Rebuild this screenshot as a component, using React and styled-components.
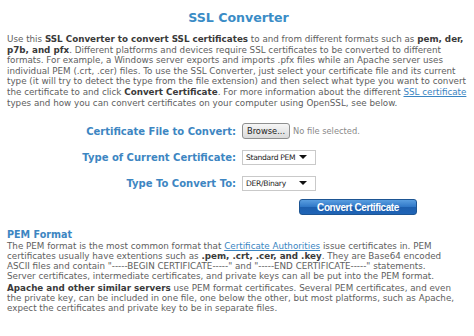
import React from "react";
import styled, { createGlobalStyle } from "styled-components";

const GlobalStyle = createGlobalStyle`
  body {
    margin: 0;
    background: #ffffff;
    font-family: "DejaVu Sans", Verdana, sans-serif;
  }
`;

const Page = styled.div`
  width: 474px;
  height: 336px;
  overflow: hidden;
  box-sizing: border-box;
  padding: 10px 4px 0 7px;
  color: #5e5e5e;
  font-size: 8.75px;
`;

const Title = styled.h1`
  margin: 0 0 8px;
  text-align: center;
  color: #3a8cc6;
  font-size: 12.6px;
  line-height: 16px;
  font-weight: bold;
`;

const Para = styled.p`
  margin: 0 0 ${(p) => p.$gap || 0}px;
  line-height: ${(p) => p.$lh || 10.6}px;
`;

// keeps each line of the original as one line
const Line = styled.span`
  display: block;
  white-space: nowrap;
`;

const Strong = styled.b`
  color: #3a3a3a;
`;

const Link = styled.a`
  color: #3a85c2;
  text-decoration: underline;
`;

const Form = styled.div`
  display: grid;
  grid-template-columns: 229px auto;
  grid-auto-rows: 16px;
  column-gap: 6px;
  row-gap: 10px;
  align-items: center;
  margin: 15px 0 0;
`;

const Label = styled.div`
  text-align: right;
  color: #3d86c2;
  font-weight: bold;
  font-size: 10px;
  white-space: nowrap;
`;

const FileField = styled.div`
  display: flex;
  align-items: center;
  gap: 3px;
  font-family: Tahoma, "DejaVu Sans", sans-serif;
  font-size: 8.3px;
  color: #8a8a8a;
  white-space: nowrap;
`;

const BrowseButton = styled.div`
  box-sizing: border-box;
  width: 48px;
  height: 16px;
  border: 1px solid #8e8f8f;
  border-radius: 3px;
  background: linear-gradient(#f6f6f6, #dadada);
  color: #222;
  display: flex;
  align-items: center;
  justify-content: center;
  font-size: 8.3px;
`;

const Select = styled.div`
  box-sizing: border-box;
  width: 74px;
  height: 15px;
  border: 1px solid #c9c9c9;
  background: #fff;
  display: flex;
  align-items: center;
  justify-content: space-between;
  padding: 0 8px 0 3px;
  font-size: 7.6px;
  color: #222;
  letter-spacing: -0.3px;
  white-space: nowrap;
`;

const Arrow = styled.span`
  width: 0;
  height: 0;
  border-left: 4px solid transparent;
  border-right: 4px solid transparent;
  border-top: 4px solid #111;
`;

const ButtonRow = styled.div`
  grid-column: 1 / span 2;
  display: flex;
  justify-content: flex-end;
  padding-right: 53px;
  margin-top: -4px;
`;

const ConvertButton = styled.div`
  box-sizing: border-box;
  width: 118px;
  height: 16px;
  border: 1px solid #1d5593;
  border-radius: 3px;
  background: linear-gradient(#5a9ee0 0%, #2f77c7 50%, #1d5fae 51%, #1f64b6 100%);
  color: #fff;
  font-family: "Liberation Sans", Arial, sans-serif;
  font-weight: bold;
  font-size: 10px;
  letter-spacing: -0.4px;
  display: flex;
  align-items: center;
  justify-content: center;
`;

const Heading = styled.h2`
  margin: 12px 0 0;
  color: #3d86c2;
  font-size: 9.6px;
  line-height: 12px;
  font-weight: bold;
`;

export default function App() {
  return (
    <Page>
      <GlobalStyle />
      <Title>SSL Converter</Title>
      <Para>
        <Line>
          Use this <Strong>SSL Converter to convert SSL certificates</Strong> to
          and from different formats such as <Strong>pem, der,</Strong>
        </Line>
        <Line>
          <Strong>p7b, and pfx</Strong>. Different platforms and devices require
          SSL certificates to be converted to different
        </Line>
        <Line>
          formats. For example, a Windows server exports and imports .pfx files
          while an Apache server uses
        </Line>
        <Line>
          individual PEM (.crt, .cer) files. To use the SSL Converter, just select
          your certificate file and its current
        </Line>
        <Line>
          type (it will try to detect the type from the file extension) and then
          select what type you want to convert
        </Line>
        <Line>
          the certificate to and click <Strong>Convert Certificate</Strong>. For
          more information about the different <Link>SSL certificate</Link>
        </Line>
        <Line>
          types and how you can convert certificates on your computer using
          OpenSSL, see below.
        </Line>
      </Para>

      <Form>
        <Label>Certificate File to Convert:</Label>
        <FileField>
          <BrowseButton>Browse...</BrowseButton>
          No file selected.
        </FileField>

        <Label>Type of Current Certificate:</Label>
        <Select>
          Standard PEM <Arrow />
        </Select>

        <Label>Type To Convert To:</Label>
        <Select>
          DER/Binary <Arrow />
        </Select>

        <ButtonRow>
          <ConvertButton>Convert Certificate</ConvertButton>
        </ButtonRow>
      </Form>

      <Heading>PEM Format</Heading>
      <Para $lh={10} $gap={2}>
        <Line>
          The PEM format is the most common format that{" "}
          <Link>Certificate Authorities</Link> issue certificates in. PEM
        </Line>
        <Line>
          certificates usually have extentions such as{" "}
          <Strong>.pem, .crt, .cer, and .key</Strong>. They are Base64 encoded
        </Line>
        <Line>
          ASCII files and contain "-----BEGIN CERTIFICATE-----" and "-----END
          CERTIFICATE-----" statements.
        </Line>
        <Line>
          Server certificates, intermediate certificates, and private keys can
          all be put into the PEM format.
        </Line>
      </Para>
      <Para $lh={10}>
        <Line>
          <Strong>Apache and other similar servers</Strong> use PEM format
          certificates. Several PEM certificates, and even
        </Line>
        <Line>
          the private key, can be included in one file, one below the other, but
          most platforms, such as Apache,
        </Line>
        <Line>
          expect the certificates and private key to be in separate files.
        </Line>
      </Para>
    </Page>
  );
}
